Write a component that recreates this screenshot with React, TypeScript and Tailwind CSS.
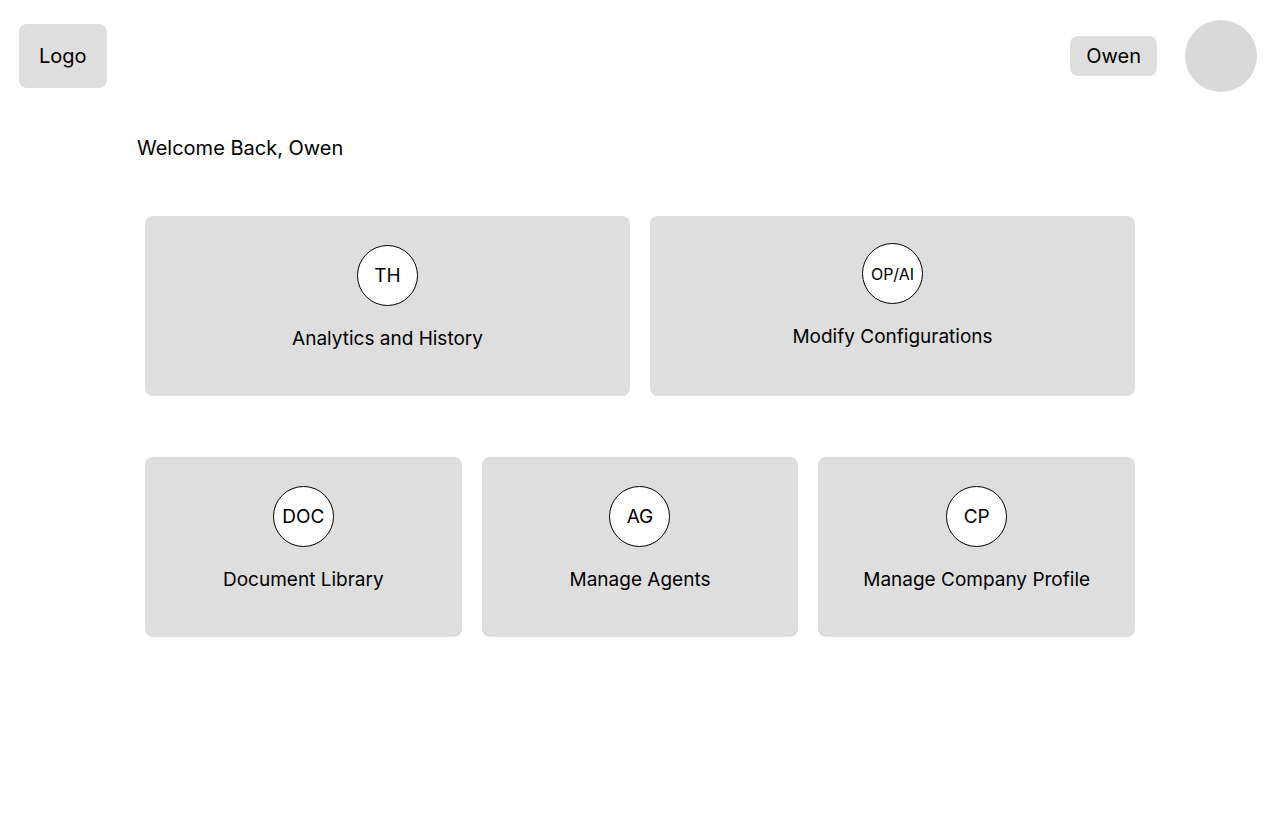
const primaryCards = [
  { badge: "TH", label: "Analytics and History", badgeText: "text-[19px] leading-6", pad: "pt-[29px]" },
  { badge: "OP/AI", label: "Modify Configurations", badgeText: "text-base leading-5", pad: "pt-[27px]" },
];

const secondaryCards = [
  { badge: "DOC", label: "Document Library", badgeText: "text-[19px] leading-6", pad: "pt-[29px]" },
  { badge: "AG", label: "Manage Agents", badgeText: "text-[19px] leading-6", pad: "pt-[29px]" },
  { badge: "CP", label: "Manage Company Profile", badgeText: "text-[19px] leading-6", pad: "pt-[29px]" },
];

type CardProps = { badge: string; label: string; badgeText: string; pad: string };

function Card({ badge, label, badgeText, pad }: CardProps) {
  return (
    <button
      type="button"
      className={`flex h-[180px] flex-col items-center justify-start gap-[21px] rounded-lg bg-[#dedede] ${pad}`}
    >
      <span
        className={`flex size-[61px] items-center justify-center rounded-full border border-black bg-white ${badgeText}`}
      >
        {badge}
      </span>
      <span className="text-[19px] leading-6">{label}</span>
    </button>
  );
}

export default function App() {
  return (
    <div className="min-h-screen bg-white font-['Inter',sans-serif] text-black">
      <header className="flex items-center justify-between pt-5 pr-[23px] pl-[19px]">
        <a href="#" className="flex h-16 items-center rounded-lg bg-[#dedede] px-5 text-xl">
          Logo
        </a>
        <div className="flex items-center gap-7">
          <button type="button" className="h-10 rounded-lg bg-[#dedede] px-4 text-xl">
            Owen
          </button>
          <div className="size-[72px] rounded-full bg-[#d9d9d9]" />
        </div>
      </header>
      <main className="pt-[42px]">
        <h1 className="px-[137px] text-xl">Welcome Back, Owen</h1>
        <div className="px-[145px] pt-[54px]">
          <div className="grid grid-cols-2 gap-5">
            {primaryCards.map((card) => (
              <Card key={card.badge} {...card} />
            ))}
          </div>
          <div className="grid grid-cols-3 gap-5 pt-[61px]">
            {secondaryCards.map((card) => (
              <Card key={card.badge} {...card} />
            ))}
          </div>
        </div>
      </main>
    </div>
  );
}
